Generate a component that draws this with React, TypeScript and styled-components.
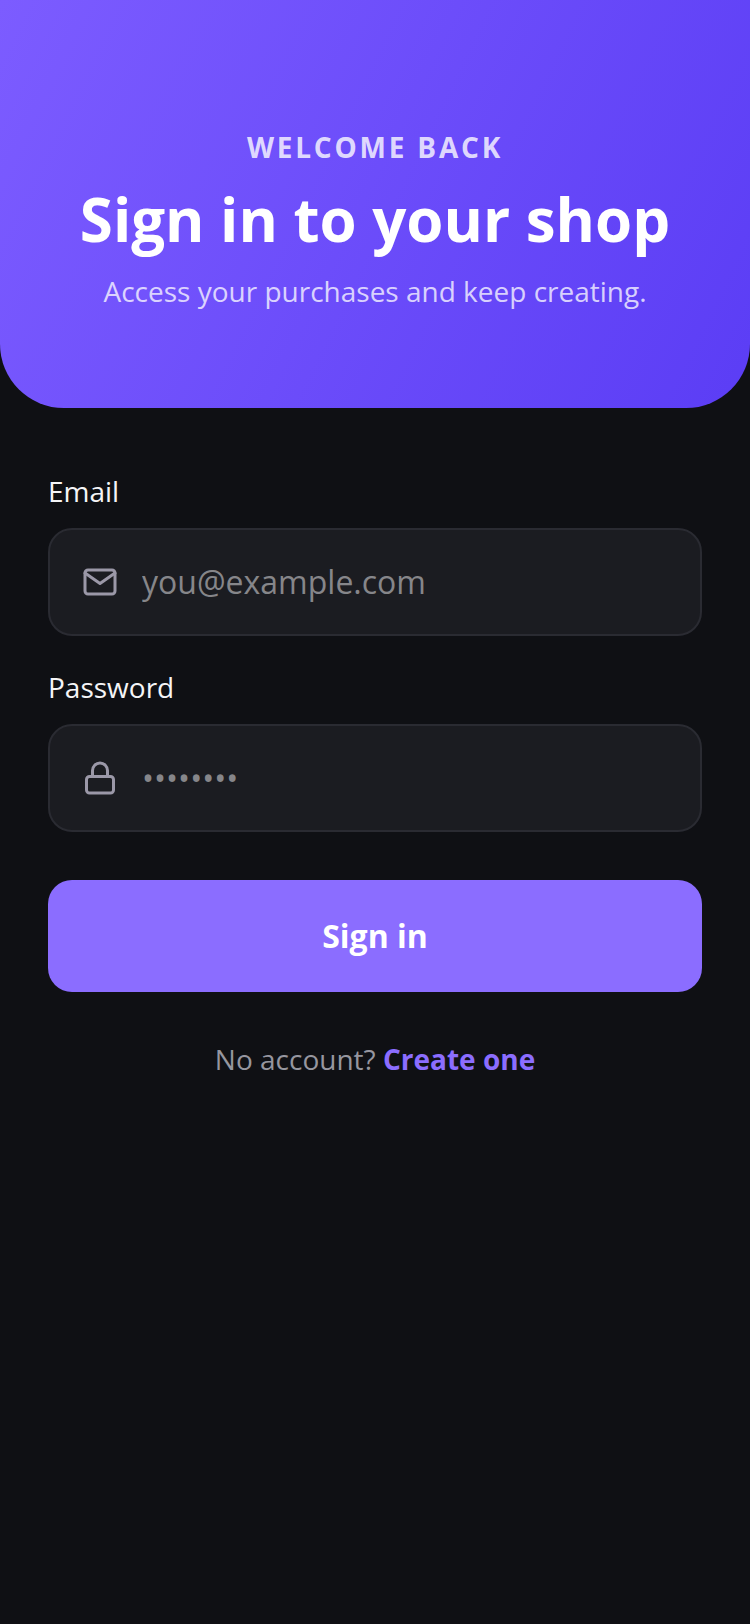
import React from 'react';
import styled, { createGlobalStyle } from 'styled-components';

const GlobalStyle = createGlobalStyle`
  *, *::before, *::after { box-sizing: border-box; }
  body {
    margin: 0;
    background: #0f1014;
    color: #f5f5f7;
    font-family: "Open Sans", sans-serif;
  }
`;

const Page = styled.main`
  min-height: 100vh;
  background: #0f1014;
`;

const Hero = styled.header`
  display: flex;
  flex-direction: column;
  align-items: center;
  gap: 10px;
  padding: 128px 48px 98px;
  border-radius: 0 0 64px 64px;
  background: linear-gradient(116deg, #7c5cff 0%, #5b3df5 100%);
  text-align: center;
`;

const Eyebrow = styled.p`
  margin: 0;
  font-size: 28px;
  line-height: 38px;
  font-weight: 700;
  letter-spacing: 0.1em;
  text-transform: uppercase;
  color: rgba(255, 255, 255, 0.8);
`;

const Title = styled.h1`
  margin: 0;
  color: #ffffff;
  font-size: 60px;
  line-height: 86px;
  font-weight: 700;
`;

const Subtitle = styled.p`
  margin: 0;
  font-size: 28px;
  line-height: 38px;
  color: rgba(255, 255, 255, 0.75);
`;

const Form = styled.form`
  display: flex;
  flex-direction: column;
  padding: 64px 48px;
`;

const Field = styled.div`
  display: flex;
  flex-direction: column;
  gap: 18px;
  margin-bottom: 32px;
`;

const Label = styled.label`
  font-size: 28px;
  line-height: 38px;
`;

const InputBox = styled.div`
  display: flex;
  align-items: center;
  gap: 24px;
  height: 108px;
  padding: 0 32px;
  border: 2px solid #2a2b32;
  border-radius: 24px;
  background: #1b1c21;
`;

const Icon = styled.svg`
  flex: none;
  width: 36px;
  height: 36px;
  fill: none;
  stroke: #9b98a8;
  stroke-width: 2;
  stroke-linecap: round;
  stroke-linejoin: round;
`;

const Input = styled.input`
  flex: 1;
  min-width: 0;
  padding: 0;
  border: 0;
  outline: 0;
  background: transparent;
  color: #ffffff;
  font: 400 32px/44px "Open Sans", sans-serif;
  &::placeholder { color: #86868a; opacity: 1; }
`;

const SubmitButton = styled.button`
  height: 112px;
  margin-top: 16px;
  border: 0;
  border-radius: 24px;
  background: #8b6dff;
  color: #ffffff;
  font: 700 32px/44px "Open Sans", sans-serif;
  cursor: pointer;
`;

const SignUp = styled.p`
  margin: 48px 0 0;
  font-size: 28px;
  line-height: 38px;
  text-align: center;
  color: #96969f;
`;

const SignUpLink = styled.a`
  color: #8b6dff;
  font-weight: 700;
  text-decoration: none;
`;

const MailIcon = () => (
  <Icon viewBox="0 0 24 24" aria-hidden="true">
    <path d="M4 4h16c1.1 0 2 .9 2 2v12c0 1.1-.9 2-2 2H4c-1.1 0-2-.9-2-2V6c0-1.1.9-2 2-2z" />
    <polyline points="22,6 12,13 2,6" />
  </Icon>
);

const LockIcon = () => (
  <Icon viewBox="0 0 24 24" aria-hidden="true">
    <rect x="3" y="11" width="18" height="11" rx="2" ry="2" />
    <path d="M7 11V7a5 5 0 0 1 10 0v4" />
  </Icon>
);

export default function App() {
  return (
    <Page>
      <GlobalStyle />
      <Hero>
        <Eyebrow>Welcome back</Eyebrow>
        <Title>Sign in to your shop</Title>
        <Subtitle>Access your purchases and keep creating.</Subtitle>
      </Hero>
      <Form onSubmit={(event) => event.preventDefault()}>
        <Field>
          <Label htmlFor="email">Email</Label>
          <InputBox>
            <MailIcon />
            <Input id="email" type="email" placeholder="you@example.com" />
          </InputBox>
        </Field>
        <Field>
          <Label htmlFor="password">Password</Label>
          <InputBox>
            <LockIcon />
            <Input id="password" type="password" placeholder="••••••••" />
          </InputBox>
        </Field>
        <SubmitButton type="submit">Sign in</SubmitButton>
        <SignUp>
          No account? <SignUpLink href="#create">Create one</SignUpLink>
        </SignUp>
      </Form>
    </Page>
  );
}
